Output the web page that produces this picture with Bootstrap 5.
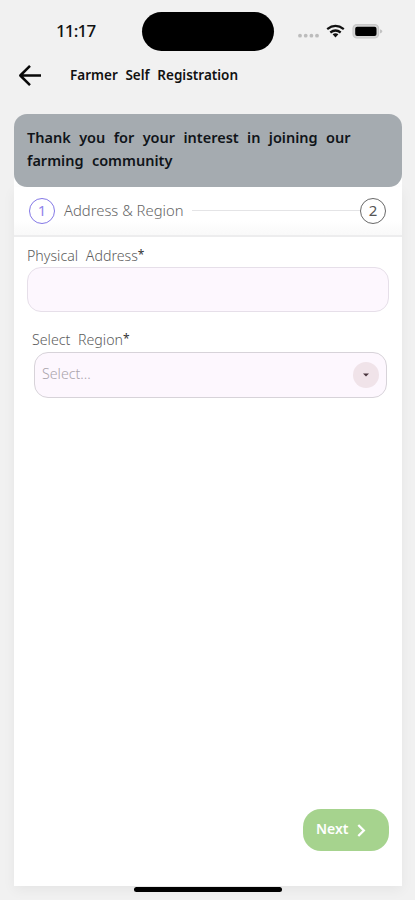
<!DOCTYPE html>
<html lang="en">
<head>
<meta charset="utf-8">
<meta name="viewport" content="width=device-width, initial-scale=1">
<title>Farmer Self Registration</title>
<link href="https://cdn.jsdelivr.net/npm/bootstrap@5.3.0/dist/css/bootstrap.min.css" rel="stylesheet">
<style>
body{background:#f1f1f1;font-family:"Noto Sans","Open Sans",sans-serif;color:#111;height:900px;overflow:hidden}
svg{display:block;flex:none}
.status{height:60px;padding:12px 30px 0 56px}
.clock{font:500 17px/38px "Noto Sans",sans-serif;width:86px;flex:none;letter-spacing:-.85px}
.island{width:132px;height:39px;background:#000;flex:none}
.sysicons{height:38px;margin-left:24px}
.topbar{height:54px;padding:0 18px 24px}
.page-title{font-size:13.5px;font-weight:600;word-spacing:4.2px;margin:0 0 1px 28px;line-height:28px;white-space:nowrap}
.sheet{margin:0 13px 0 14px;height:772px;background:linear-gradient(transparent 60px,#fff 60px)}
.banner{height:73px;background:#a5abb0;border-radius:13px;padding:12px 13px;font-size:14.5px;line-height:23px;font-weight:600;word-spacing:4.6px;color:#101419;white-space:nowrap}
.panel{box-shadow:0 4px 12px rgba(0,0,0,.05)}
.stepper{height:50px;padding:0 16px 1px 15px;background:linear-gradient(#fff 70%,#f9f9f9);border-bottom:2px solid #ededee}
.step-no{width:26px;height:26px;border:1.2px solid #686868;font-size:15px;color:#555;flex:none}
.step-no.current{border-color:#8478e6;color:#9184ec}
.step-name{font-size:14.8px;color:#666;margin-left:9px;white-space:nowrap;font-weight:300}
.track{height:1px;background:#e4e4e6;margin-left:8px}
.field-name{display:block;font-size:14.2px;line-height:20px;color:#5c5c5c;word-spacing:4px;font-weight:300;white-space:nowrap}
.field-name b{color:#333;font-size:12px;line-height:1;position:relative;top:-2px}
.entry,.entry:focus{height:45px;background:#fdf7fe;border:1px solid #e6dfe9;border-radius:14px}
.choice{height:46px;background:#fdf7fe;border:1px solid #d7d3d9;border-radius:14px;padding:0 7px 3px;font-size:14.2px;color:#aaa4ab;font-weight:300}
.drop{width:26px;height:26px;background:#f0e3e9;margin-top:2px}
.first-field{margin:9px 13px 0}
.first-field .entry{margin-top:1px}
.second-field{margin:18px 15px 0 18px}
.second-field .choice{margin:2px 0 0 2px}
.next{width:86px;height:42px;background:#a6d38e;border-radius:18px;color:#fff;font-size:14px;font-weight:600;padding:0 0 3px 13px;border:0;margin:0 13px 35px 0}
.chev{margin:3px 0 0 8px}
.home-bar{position:absolute;left:134px;top:887px;width:148px;height:5px;background:#000}
</style>
</head>
<body>
<div class="status d-flex">
  <div class="clock">11:17</div>
  <div class="island rounded-pill"></div>
  <div class="sysicons d-flex align-items-center">
    <svg width="86" height="20" viewBox="0 0 86 20">
      <g fill="#bcbcbc"><circle cx="2" cy="14.7" r="1.9"/><circle cx="7.7" cy="14.7" r="1.9"/><circle cx="13.4" cy="14.7" r="1.9"/><circle cx="19" cy="14.7" r="1.9"/></g>
      <g fill="none" stroke="#111" stroke-width="2.3"><path d="M29.2 8.1Q37.5 1.7 45.8 8.1"/><path d="M32.3 11.5Q37.5 7.4 42.7 11.5"/></g>
      <path d="M34.6 13.3Q37.5 11.4 40.4 13.3L37.5 16.4Z" fill="#111"/>
      <rect x="55" y="3.6" width="25.6" height="13.4" rx="4" fill="#d6d6d6" stroke="#c8c8c8" stroke-width="1.2"/><rect x="57.2" y="5.7" width="21.3" height="9.4" rx="2" fill="#000"/><path d="M82 8.2Q84.4 9 84.4 10.3T82 12.4Z" fill="#c2c2c2"/>
    </svg>
  </div>
</div>
<header class="topbar d-flex align-items-center">
  <svg width="24" height="24" viewBox="0 0 24 24" fill="none" stroke="#080808" stroke-width="2.5" stroke-linejoin="round"><path d="M23 12.5H3M12 2.8 2.3 12.5 12 22.2"/></svg>
  <h1 class="page-title">Farmer Self Registration</h1>
</header>
<main class="sheet d-flex flex-column">
  <div class="banner position-relative z-1">Thank you for your interest in joining our<br>farming community</div>
  <div class="panel d-flex flex-column flex-grow-1">
    <div class="stepper d-flex align-items-center">
      <span class="step-no current rounded-circle d-flex align-items-center justify-content-center">1</span>
      <span class="step-name">Address &amp; Region</span>
      <span class="track flex-grow-1"></span>
      <span class="step-no rounded-circle d-flex align-items-center justify-content-center">2</span>
    </div>
    <form class="d-flex flex-column flex-grow-1">
      <div class="first-field">
        <label class="field-name" for="address">Physical Address<b>*</b></label>
        <input class="form-control entry" id="address" type="text">
      </div>
      <div class="second-field">
        <span class="field-name">Select Region<b>*</b></span>
        <div class="choice d-flex align-items-center justify-content-between">
          <span>Select...</span>
          <span class="drop rounded-circle d-flex align-items-center justify-content-center"><svg width="6" height="4" viewBox="0 0 6 4"><path d="M0 .5H6L3 3.5Z" fill="#49353d"/></svg></span>
        </div>
      </div>
      <button class="next btn d-flex align-items-center align-self-end mt-auto" type="button">Next
        <svg class="chev" width="9" height="13" viewBox="0 0 9 13" fill="none" stroke="#fff" stroke-width="2.3"><path d="m1.3 1 5.5 5.5L1.3 12"/></svg>
      </button>
    </form>
  </div>
</main>
<div class="home-bar rounded-pill"></div>
<script src="https://cdn.jsdelivr.net/npm/bootstrap@5.3.0/dist/js/bootstrap.bundle.min.js"></script>
</body>
</html>
